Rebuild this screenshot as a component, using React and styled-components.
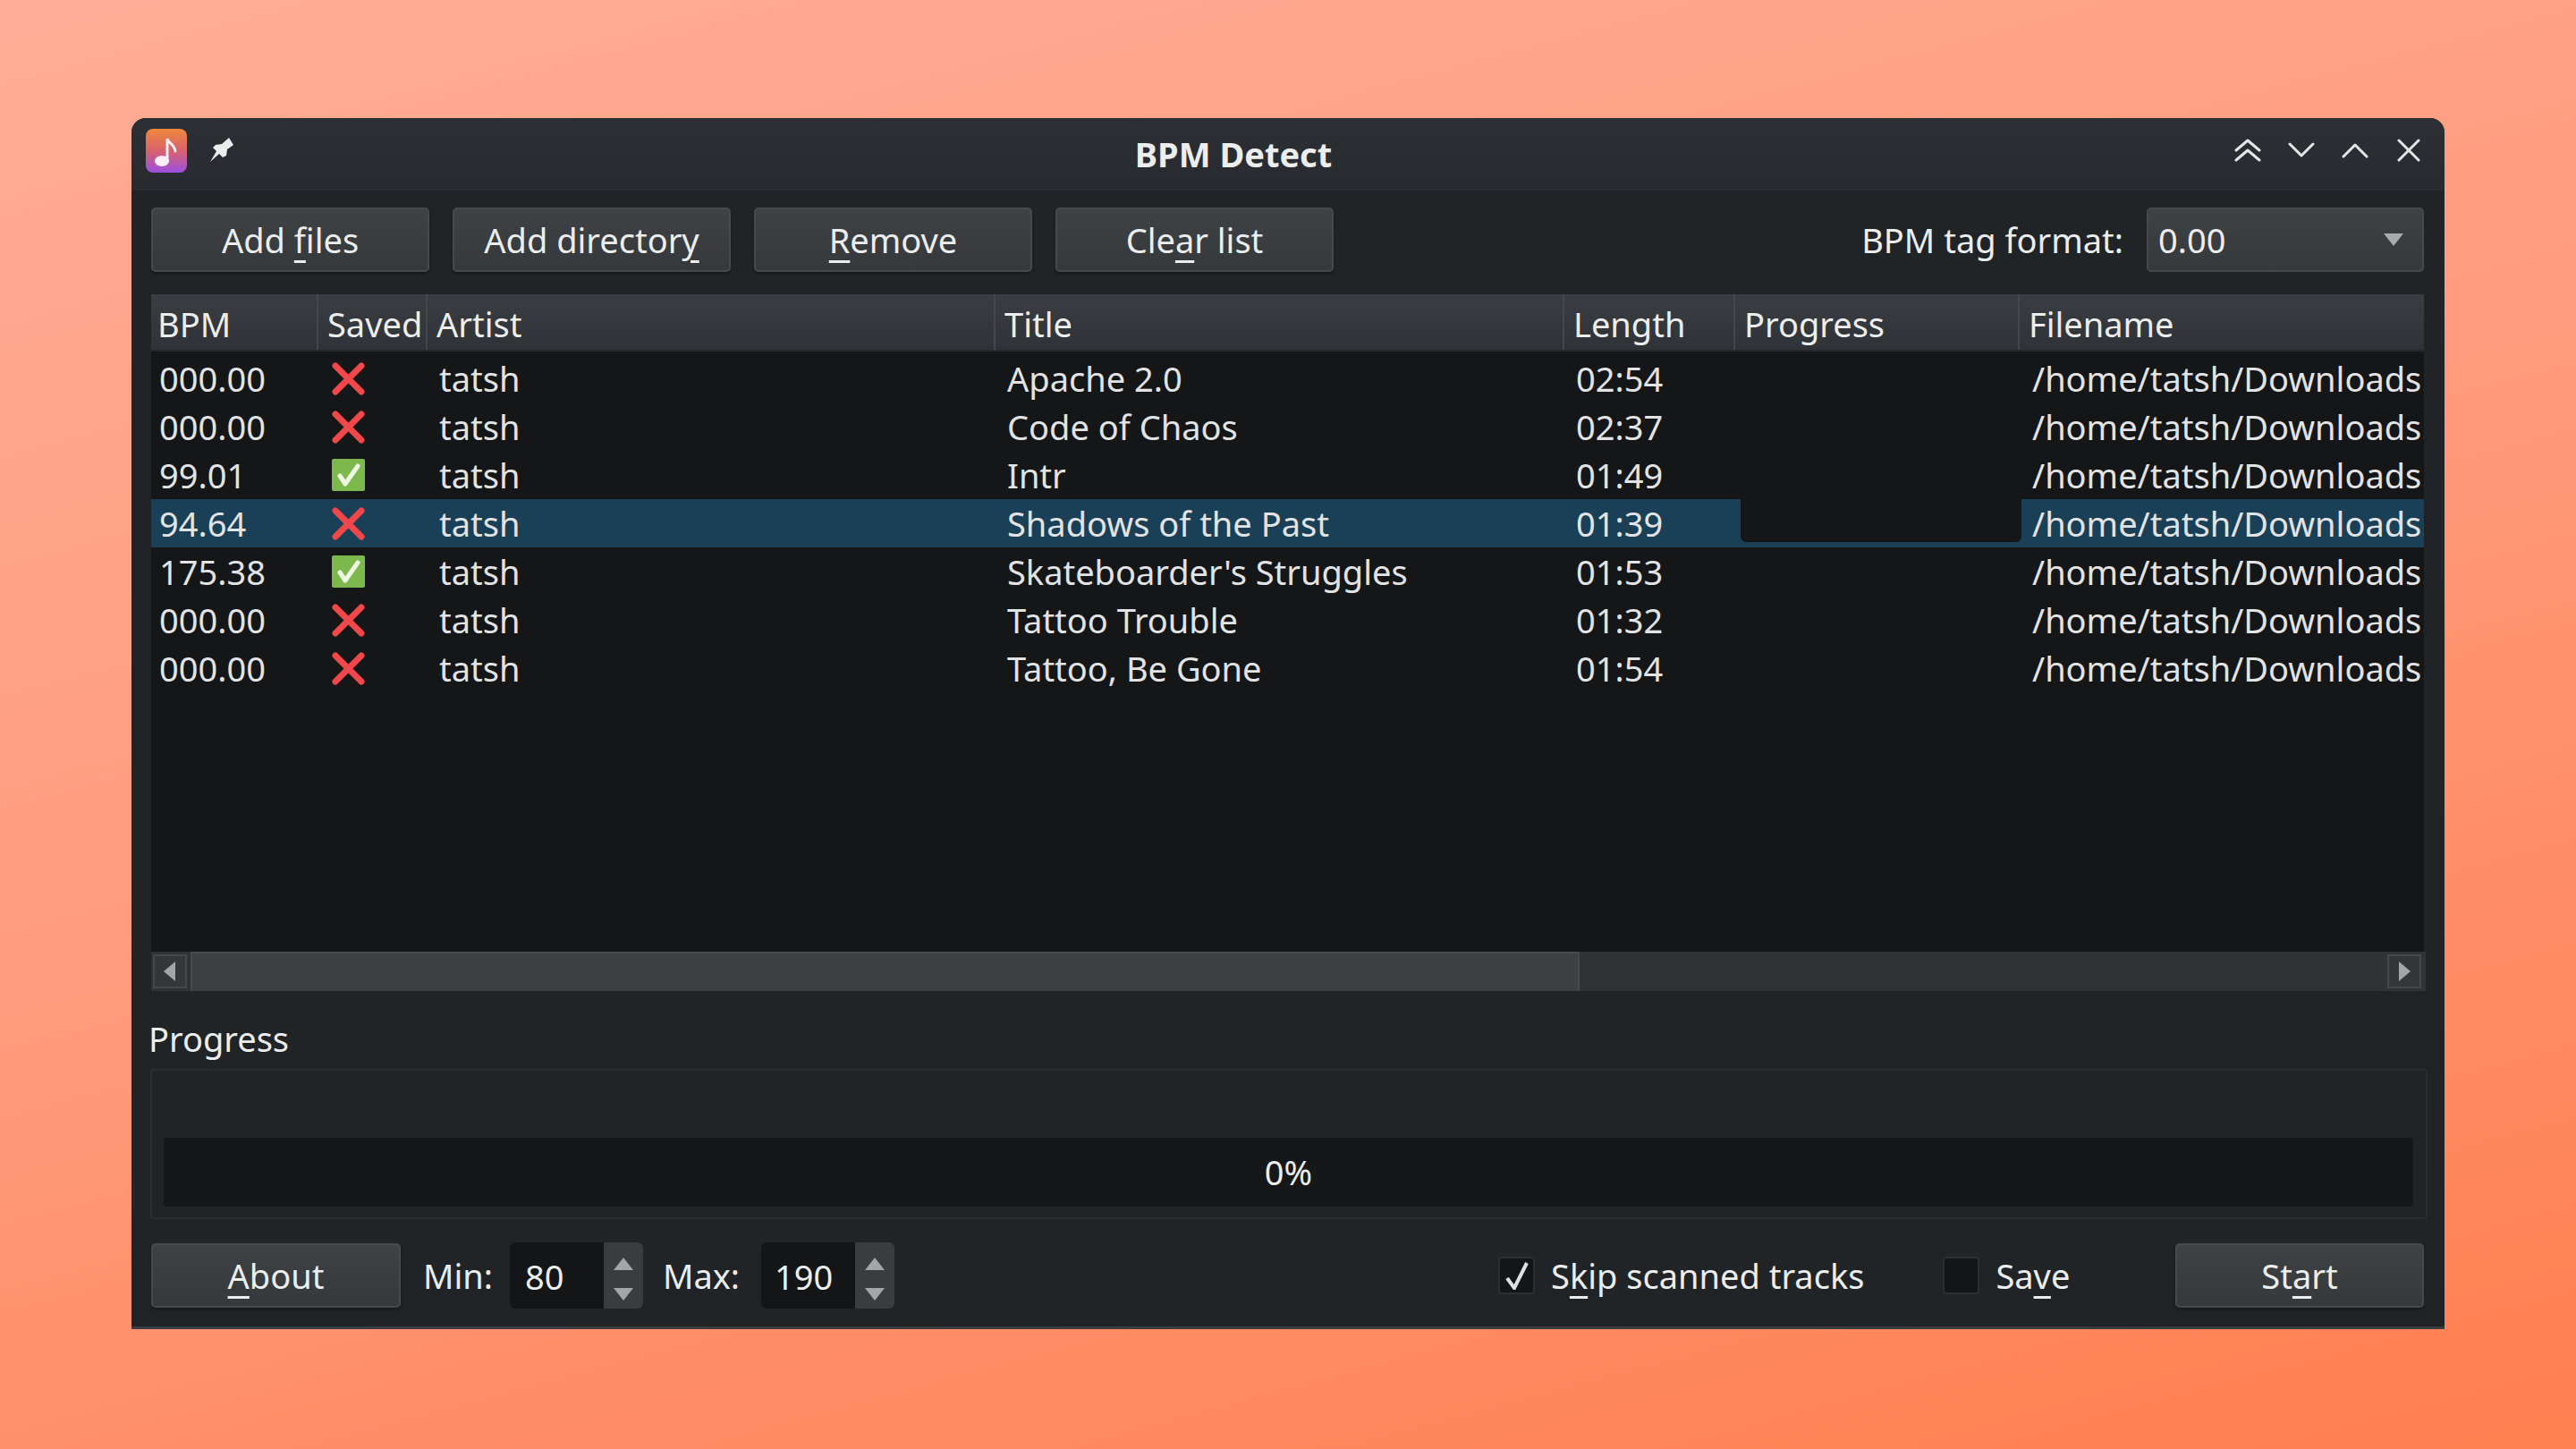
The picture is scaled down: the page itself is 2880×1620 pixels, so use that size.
import React from "react";
import styled, {createGlobalStyle} from "styled-components";

const GlobalStyle = createGlobalStyle`
  html, body {
    margin: 0;
    padding: 0;
    width: 2880px;
    height: 1620px;
    overflow: hidden;
  }
  * {
    box-sizing: border-box;
  }
`

const COLUMNS = "185px 122px 635px 636px 191px 318px 454px";

const Page = styled.div`
  width: 2880px;
  height: 1620px;
  padding-bottom: 2px;
  display: flex;
  align-items: center;
  justify-content: center;
  background: linear-gradient(165deg, #ffad97 0%, #ff9c7e 45%, #ff7f50 100%);
  font-family: "Noto Sans", sans-serif;
  font-size: 38px;
  color: #eceded;
`
const Window = styled.div`
  width: 2586px;
  height: 1354px;
  display: flex;
  flex-direction: column;
  background: #212427;
  border-radius: 16px 16px 0 0;
  border-bottom: 3px solid #3a3d40;
  overflow: hidden;
`
const TitleBar = styled.div`
  height: 81px;
  flex: none;
  display: flex;
  align-items: flex-start;
  background: linear-gradient(180deg, #2c3034 0%, #272a2e 100%);
`
const TitleLeft = styled.div`
  width: 128px;
  flex: none;
  display: flex;
  padding: 12px 0 0 16px;
  gap: 25px;
`
const AppIcon = styled.div`
  width: 46px;
  height: 49px;
  border-radius: 8px;
  background: linear-gradient(180deg, #f0883c 0%, #d8626c 50%, #9c50e0 100%);
  display: flex;
  align-items: center;
  justify-content: center;
`
const PinIcon = styled.svg`
  width: 27px;
  height: 28px;
  margin-top: 10px;
`
const Title = styled.div`
  flex: 1;
  text-align: center;
  font-weight: 700;
  line-height: 80px;
`
const TitleButtons = styled.div`
  width: 250px;
  flex: none;
  display: flex;
  padding-right: 10px;
`
const TitleButton = styled.div`
  width: 60px;
  height: 72px;
  display: flex;
  align-items: center;
  justify-content: center;
  svg {
    fill: none;
    stroke: #e4e5e6;
    stroke-width: 3;
    stroke-linecap: round;
    stroke-linejoin: round;
  }
`
const Content = styled.div`
  flex: 1;
  display: flex;
  flex-direction: column;
  padding: 19px 23px 0 22px;
`
const Toolbar = styled.div`
  display: flex;
  align-items: center;
  gap: 26px;
  height: 72px;
`
const Button = styled.div`
  width: ${(p) => p.$width || 311}px;
  height: 72px;
  flex: none;
  display: flex;
  align-items: center;
  justify-content: center;
  background: linear-gradient(180deg, #3f4245 0%, #36393c 100%);
  border: 2px solid #474a4d;
  border-radius: 5px;
  box-shadow: 0 2px 3px rgba(0, 0, 0, 0.35);
`
const StartButton = styled(Button)`
  margin-left: auto;
`
const Mnemonic = styled.span`
  text-decoration: underline;
  text-decoration-thickness: 3px;
  text-underline-offset: 8px;
`
const ComboLabel = styled.div`
  margin-left: auto;
`
const Combo = styled.div`
  width: 310px;
  height: 72px;
  flex: none;
  display: flex;
  align-items: center;
  justify-content: space-between;
  padding: 0 20px 0 11px;
  background: linear-gradient(180deg, #3f4245 0%, #36393c 100%);
  border: 2px solid #474a4d;
  border-radius: 5px;
`
const TableBox = styled.div`
  margin-top: 25px;
  height: 779px;
  flex: none;
  display: flex;
  flex-direction: column;
`
const HeaderRow = styled.div`
  height: 64px;
  flex: none;
  display: grid;
  grid-template-columns: ${COLUMNS};
  background: linear-gradient(180deg, #3a3d41 0%, #2f3236 100%);
  border-bottom: 2px solid #26292c;
`
const HeaderCell = styled.div`
  display: flex;
  align-items: center;
  padding: 4px 0 0 10px;
  border-left: 2px solid #45484b;
  white-space: nowrap;
  overflow: hidden;
  &:first-child {
    padding-left: 7px;
    border-left: none;
  }
`
const RowList = styled.div`
  flex: 1;
  padding-top: 3px;
  background: #141618;
`
const Row = styled.div`
  height: 54px;
  display: grid;
  grid-template-columns: ${COLUMNS};
  background: ${(p) => (p.$selected ? "#1a4058" : "transparent")};
`
const Cell = styled.div`
  display: flex;
  align-items: center;
  padding-left: 15px;
  white-space: nowrap;
  overflow: hidden;
  color: #e2e3e4;
  &:first-child {
    padding-left: 9px;
  }
`
const SavedCell = styled(Cell)`
  padding-left: 17px;
`
const FileCell = styled(Cell)`
  padding-left: 16px;
`
const CellBar = styled.div`
  width: 314px;
  height: 48px;
  margin: 0 -4px 6px 8px;
  flex: none;
  align-self: flex-start;
  background: #141618;
  border-radius: 0 0 6px 6px;
`
const ProgressCell = styled.div`
  display: flex;
  min-width: 0;
`
const ScrollBar = styled.div`
  height: 44px;
  flex: none;
  width: 2543px;
  display: flex;
  align-items: center;
  background: #2f3336;
`
const ScrollButton = styled.div`
  width: 38px;
  height: 38px;
  flex: none;
  margin: 0 ${(p) => p.$right || 0}px 0 ${(p) => p.$left || 0}px;
  display: flex;
  align-items: center;
  justify-content: center;
  background: #33373a;
  border: 2px solid #45484b;
`
const ScrollThumb = styled.div`
  width: 1553px;
  height: 44px;
  flex: none;
  margin-left: 4px;
  background: #3c4042;
  border: 2px solid #464a4c;
  border-bottom: none;
`
const ScrollRest = styled.div`
  flex: 1;
`
const ProgressLabel = styled.div`
  margin-top: 26px;
  margin-left: -3px;
  height: 54px;
  line-height: 54px;
  flex: none;
`
const GroupBox = styled.div`
  margin-top: 7px;
  margin-left: -1px;
  width: 2546px;
  height: 168px;
  flex: none;
  padding: 75px 14px 0 13px;
  border: 2px solid #2a2e31;
  border-radius: 4px;
`
const ProgressBar = styled.div`
  height: 77px;
  display: flex;
  align-items: center;
  justify-content: center;
  padding-bottom: 2px;
  background: #151719;
  border-radius: 4px;
`
const BottomRow = styled.div`
  margin-top: 26px;
  display: flex;
  align-items: center;
  height: 74px;
`
const FieldLabel = styled.div`
  margin: 0 ${(p) => p.$right}px 0 ${(p) => p.$left}px;
`
const SpinBox = styled.div`
  width: 149px;
  height: 74px;
  flex: none;
  display: flex;
  background: #131517;
  border-radius: 6px;
  overflow: hidden;
`
const SpinValue = styled.div`
  flex: 1;
  display: flex;
  align-items: center;
  padding: 2px 0 0 ${(p) => p.$pad}px;
`
const SpinArrows = styled.div`
  width: 44px;
  flex: none;
  display: flex;
  flex-direction: column;
  align-items: center;
  gap: 16px;
  padding-top: 15px;
  background: #3a3d40;
`
const CheckGroup = styled.div`
  display: flex;
  align-items: center;
  gap: 18px;
  margin-left: ${(p) => p.$left}px;
`
const CheckBox = styled.div`
  width: 41px;
  height: 42px;
  flex: none;
  display: flex;
  align-items: center;
  justify-content: center;
  background: #131517;
  border: 2px solid #2c3033;
  border-radius: 4px;
`

const Cross = () => (
    <svg width="37" height="37" viewBox="0 0 37 37">
        <path d="M4 4 L33 33 M33 4 L4 33" stroke="#f0484a" strokeWidth="7" strokeLinecap="round"/>
    </svg>
)

const Check = () => (
    <svg width="37" height="36" viewBox="0 0 37 36">
        <rect width="37" height="36" rx="2" fill="#7cb84c"/>
        <path d="M9 19 L15 28 L29 8" stroke="#eef6e4" strokeWidth="5" fill="none" strokeLinecap="round" strokeLinejoin="round"/>
    </svg>
)

const Triangle = ({dir, size = 24, color = "#a3a5a7"}) => {
    const points = {
        up: "12,2 23,16 1,16",
        down: "1,2 23,2 12,16",
        left: "18,1 18,23 5,12",
        right: "6,1 6,23 19,12",
    }
    return (
        <svg width={size} height={dir === "left" || dir === "right" ? size : size * 0.75}
             viewBox={dir === "left" || dir === "right" ? "0 0 24 24" : "0 0 24 18"}>
            <polygon points={points[dir]} fill={color}/>
        </svg>
    )
}

const TRACKS = [
    {bpm: "000.00", saved: false, title: "Apache 2.0", length: "02:54"},
    {bpm: "000.00", saved: false, title: "Code of Chaos", length: "02:37"},
    {bpm: "99.01", saved: true, title: "Intr", length: "01:49"},
    {bpm: "94.64", saved: false, title: "Shadows of the Past", length: "01:39", selected: true},
    {bpm: "175.38", saved: true, title: "Skateboarder's Struggles", length: "01:53"},
    {bpm: "000.00", saved: false, title: "Tattoo Trouble", length: "01:32"},
    {bpm: "000.00", saved: false, title: "Tattoo, Be Gone", length: "01:54"},
]

const App = () => {
    return (
        <Page>
            <GlobalStyle/>
            <Window>
                <TitleBar>
                    <TitleLeft>
                        <AppIcon>
                            <svg width="46" height="49" viewBox="0 0 46 49">
                                <ellipse cx="18" cy="36" rx="8" ry="6" fill="#fbeef6"/>
                                <path d="M24 36 V11 C25 16 32 17 33 25" stroke="#fbeef6" strokeWidth="3" fill="none" strokeLinecap="round"/>
                            </svg>
                        </AppIcon>
                        <PinIcon viewBox="0 0 27 28">
                            <path d="M22 0 L27 8 L20 13 L19 20 L15 22 L11 18 L1 27 L8 15 L4 11 L7 8 L14 7 Z" fill="#eceded"/>
                        </PinIcon>
                    </TitleLeft>
                    <Title>BPM Detect</Title>
                    <TitleButtons>
                        <TitleButton>
                            <svg width="30" height="28" viewBox="0 0 30 28">
                                <path d="M2 14 L15 3 L28 14 M2 25 L15 14 L28 25"/>
                            </svg>
                        </TitleButton>
                        <TitleButton>
                            <svg width="30" height="18" viewBox="0 0 30 18">
                                <path d="M2 2 L15 15 L28 2"/>
                            </svg>
                        </TitleButton>
                        <TitleButton>
                            <svg width="30" height="18" viewBox="0 0 30 18">
                                <path d="M2 16 L15 3 L28 16"/>
                            </svg>
                        </TitleButton>
                        <TitleButton>
                            <svg width="26" height="26" viewBox="0 0 26 26">
                                <path d="M2 2 L24 24 M24 2 L2 24"/>
                            </svg>
                        </TitleButton>
                    </TitleButtons>
                </TitleBar>
                <Content>
                    <Toolbar>
                        <Button>Add&nbsp;<Mnemonic>f</Mnemonic>iles</Button>
                        <Button>Add director<Mnemonic>y</Mnemonic></Button>
                        <Button><Mnemonic>R</Mnemonic>emove</Button>
                        <Button>Cle<Mnemonic>a</Mnemonic>r list</Button>
                        <ComboLabel>BPM tag format:</ComboLabel>
                        <Combo>
                            <span>0.00</span>
                            <Triangle dir="down" color="#a8aaac"/>
                        </Combo>
                    </Toolbar>
                    <TableBox>
                        <HeaderRow>
                            <HeaderCell>BPM</HeaderCell>
                            <HeaderCell>Saved</HeaderCell>
                            <HeaderCell>Artist</HeaderCell>
                            <HeaderCell>Title</HeaderCell>
                            <HeaderCell>Length</HeaderCell>
                            <HeaderCell>Progress</HeaderCell>
                            <HeaderCell>Filename</HeaderCell>
                        </HeaderRow>
                        <RowList>
                            {TRACKS.map((track, i) => (
                                <Row key={i} $selected={track.selected}>
                                    <Cell>{track.bpm}</Cell>
                                    <SavedCell>{track.saved ? <Check/> : <Cross/>}</SavedCell>
                                    <Cell>tatsh</Cell>
                                    <Cell>{track.title}</Cell>
                                    <Cell>{track.length}</Cell>
                                    <ProgressCell>{track.selected && <CellBar/>}</ProgressCell>
                                    <FileCell>/home/tatsh/Downloads.</FileCell>
                                </Row>
                            ))}
                        </RowList>
                        <ScrollBar>
                            <ScrollButton $left={2}><Triangle dir="left"/></ScrollButton>
                            <ScrollThumb/>
                            <ScrollRest/>
                            <ScrollButton $right={5}><Triangle dir="right"/></ScrollButton>
                        </ScrollBar>
                    </TableBox>
                    <ProgressLabel>Progress</ProgressLabel>
                    <GroupBox>
                        <ProgressBar>0%</ProgressBar>
                    </GroupBox>
                    <BottomRow>
                        <Button $width={279}><Mnemonic>A</Mnemonic>bout</Button>
                        <FieldLabel $left={25} $right={19}>Min:</FieldLabel>
                        <SpinBox>
                            <SpinValue $pad={17}>80</SpinValue>
                            <SpinArrows>
                                <Triangle dir="up"/>
                                <Triangle dir="down"/>
                            </SpinArrows>
                        </SpinBox>
                        <FieldLabel $left={22} $right={24}>Max:</FieldLabel>
                        <SpinBox>
                            <SpinValue $pad={15}>190</SpinValue>
                            <SpinArrows>
                                <Triangle dir="up"/>
                                <Triangle dir="down"/>
                            </SpinArrows>
                        </SpinBox>
                        <CheckGroup $left={675}>
                            <CheckBox>
                                <svg width="28" height="32" viewBox="0 0 28 32">
                                    <path d="M3 19 L11 30 L25 2" stroke="#dfe0e1" strokeWidth="4" fill="none"/>
                                </svg>
                            </CheckBox>
                            <span>S<Mnemonic>k</Mnemonic>ip scanned tracks</span>
                        </CheckGroup>
                        <CheckGroup $left={88}>
                            <CheckBox/>
                            <span>Sa<Mnemonic>v</Mnemonic>e</span>
                        </CheckGroup>
                        <StartButton $width={278}>St<Mnemonic>a</Mnemonic>rt</StartButton>
                    </BottomRow>
                </Content>
            </Window>
        </Page>
    )
}

export default App;
